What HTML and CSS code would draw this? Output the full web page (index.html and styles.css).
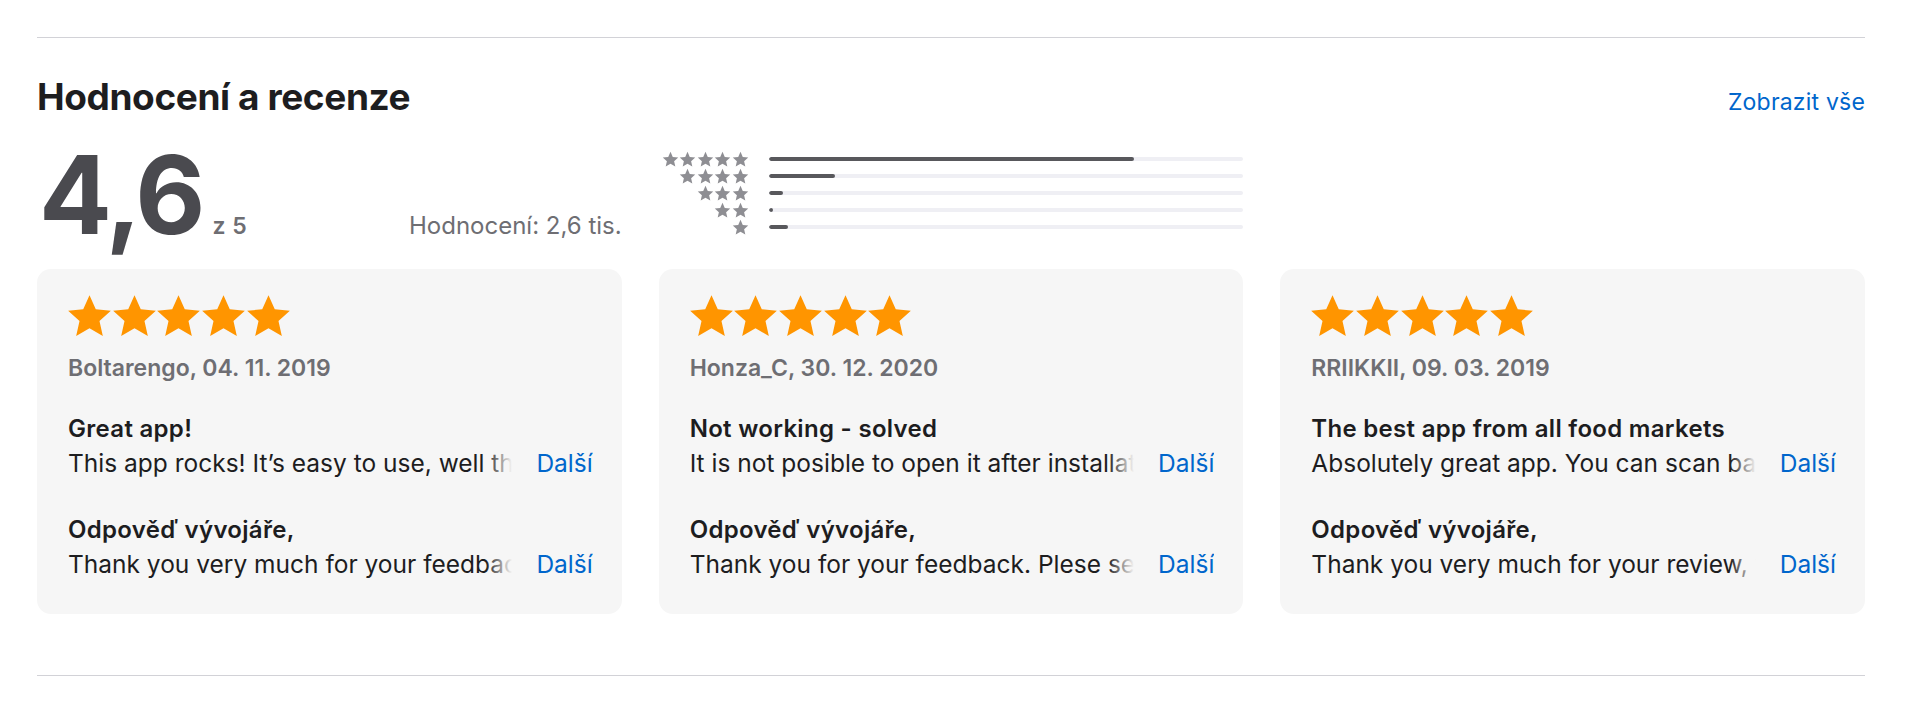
FILE: index.html
```html
<!DOCTYPE html>
<html lang="cs">
<head>
<meta charset="utf-8">
<title>Hodnocení a recenze</title>
<link rel="stylesheet" href="styles.css">
</head>
<body>
<svg width="0" height="0" class="defs" aria-hidden="true">
  <defs>
    <symbol id="star" viewBox="0 0 24 24">
      <polygon points="12,1.2 15.2,8.3 22.9,9.1 17.1,14.3 18.8,21.9 12,18 5.2,21.9 6.9,14.3 1.1,9.1 8.8,8.3"/>
    </symbol>
  </defs>
</svg>
<section class="ratings">
  <header class="head">
    <h2 class="title">Hodnocení a recenze</h2>
    <a class="link" href="#">Zobrazit vše</a>
  </header>

  <div class="summary">
    <div class="score-col">
      <div class="score"><span class="big">4,6</span><span class="outof">z 5</span></div>
      <div class="count">Hodnocení: 2,6 tis.</div>
    </div>
    <div class="hist">
      <div class="hrow">
        <div class="hstars"><svg><use href="#star"/></svg><svg><use href="#star"/></svg><svg><use href="#star"/></svg><svg><use href="#star"/></svg><svg><use href="#star"/></svg></div>
        <div class="track"><div class="fill" style="width:77%"></div></div>
      </div>
      <div class="hrow">
        <div class="hstars"><svg><use href="#star"/></svg><svg><use href="#star"/></svg><svg><use href="#star"/></svg><svg><use href="#star"/></svg></div>
        <div class="track"><div class="fill" style="width:14%"></div></div>
      </div>
      <div class="hrow">
        <div class="hstars"><svg><use href="#star"/></svg><svg><use href="#star"/></svg><svg><use href="#star"/></svg></div>
        <div class="track"><div class="fill" style="width:3%"></div></div>
      </div>
      <div class="hrow">
        <div class="hstars"><svg><use href="#star"/></svg><svg><use href="#star"/></svg></div>
        <div class="track"><div class="fill" style="width:1%"></div></div>
      </div>
      <div class="hrow">
        <div class="hstars"><svg><use href="#star"/></svg></div>
        <div class="track"><div class="fill" style="width:4%"></div></div>
      </div>
    </div>
    <div class="spacer"></div>
  </div>

  <div class="cards">
    <article class="card">
      <div class="stars"><svg><use href="#star"/></svg><svg><use href="#star"/></svg><svg><use href="#star"/></svg><svg><use href="#star"/></svg><svg><use href="#star"/></svg></div>
      <div class="author">Boltarengo, 04. 11. 2019</div>
      <h3 class="rtitle">Great app!</h3>
      <div class="line"><span class="txt">This app rocks! It’s easy to use, well thought out and I really like the scanning feature.</span><a class="more" href="#">Další</a></div>
      <h3 class="rtitle dev">Odpověď vývojáře,</h3>
      <div class="line"><span class="txt">Thank you very much for your feedback, we are glad you like the app.</span><a class="more" href="#">Další</a></div>
    </article>
    <article class="card">
      <div class="stars"><svg><use href="#star"/></svg><svg><use href="#star"/></svg><svg><use href="#star"/></svg><svg><use href="#star"/></svg><svg><use href="#star"/></svg></div>
      <div class="author">Honza_C, 30. 12. 2020</div>
      <h3 class="rtitle">Not working - solved</h3>
      <div class="line"><span class="txt">It is not posible to open it after installation, it crashes immediately.</span><a class="more" href="#">Další</a></div>
      <h3 class="rtitle dev">Odpověď vývojáře,</h3>
      <div class="line"><span class="txt">Thank you for your feedback. Plese send us more details.</span><a class="more" href="#">Další</a></div>
    </article>
    <article class="card">
      <div class="stars"><svg><use href="#star"/></svg><svg><use href="#star"/></svg><svg><use href="#star"/></svg><svg><use href="#star"/></svg><svg><use href="#star"/></svg></div>
      <div class="author">RRIIKKII, 09. 03. 2019</div>
      <h3 class="rtitle">The best app from all food markets</h3>
      <div class="line"><span class="txt">Absolutely great app. You can scan barcodes and pay quickly.</span><a class="more" href="#">Další</a></div>
      <h3 class="rtitle dev">Odpověď vývojáře,</h3>
      <div class="line"><span class="txt">Thank you very much for your review, we appreciate it.</span><a class="more" href="#">Další</a></div>
    </article>
  </div>
</section>
</body>
</html>
```

FILE: styles.css
```css
html, body {
  margin: 0;
  padding: 0;
  background: #ffffff;
}
body {
  font-family: Inter, "Liberation Sans", sans-serif;
  color: #1d1d1f;
}
.defs {
  position: absolute;
}
.ratings {
  margin: 37px 55px 0 37px;
  border-top: 1px solid #d2d2d7;
  border-bottom: 1px solid #d2d2d7;
  padding-bottom: 61px;
}
.head {
  display: flex;
  justify-content: space-between;
  align-items: baseline;
  padding-top: 37px;
}
.title {
  margin: 0;
  font-size: 37px;
  font-weight: 700;
  letter-spacing: -0.4px;
  line-height: 44px;
}
.link {
  color: #0066cc;
  text-decoration: none;
  font-size: 23px;
  letter-spacing: 0.2px;
}
.summary {
  display: grid;
  grid-template-columns: repeat(3, minmax(0, 1fr));
  column-gap: 37px;
  margin-top: 24px;
}
.score-col {
  display: flex;
  justify-content: space-between;
  align-items: baseline;
  min-width: 0;
}
.score {
  display: flex;
  align-items: baseline;
}
.big {
  font-size: 108px;
  font-weight: 700;
  line-height: 104px;
  letter-spacing: -3px;
  color: #4a4a4f;
  margin-left: 2px;
}
.outof {
  font-size: 23px;
  font-weight: 600;
  color: #6e6e73;
  margin-left: 10px;
  letter-spacing: 0.5px;
}
.count {
  font-size: 24px;
  color: #6e6e73;
}
.hist {
  display: flex;
  flex-direction: column;
  gap: 5px;
  padding-top: 10px;
  min-width: 0;
}
.hrow {
  display: flex;
  align-items: center;
  height: 12px;
}
.hstars {
  width: 90px;
  display: flex;
  justify-content: flex-end;
  gap: 0.5px;
  fill: #8e8e93;
}
.hstars svg {
  width: 17px;
  height: 17px;
}
.track {
  flex: 1;
  margin-left: 20px;
  height: 4px;
  border-radius: 2px;
  background: #efeff4;
  overflow: hidden;
}
.fill {
  height: 100%;
  background: #58585c;
  border-radius: 2px;
  min-width: 4px;
}
.cards {
  display: grid;
  grid-template-columns: repeat(3, minmax(0, 1fr));
  column-gap: 37px;
  margin-top: 22px;
}
.card {
  min-width: 0;
  background: #f6f6f6;
  border-radius: 14px;
  padding: 24px 29px 34px 31px;
}
.stars {
  display: flex;
  gap: 0;
  fill: #ff9500;
  margin-left: -2px;
}
.stars svg {
  width: 47px;
  height: 47px;
  margin-right: -2.3px;
}
.author {
  margin-top: 14px;
  font-size: 23px;
  font-weight: 600;
  color: #6e6e73;
  line-height: 28px;
}
.rtitle {
  margin: 32px 0 0;
  font-size: 24px;
  font-weight: 600;
  line-height: 30px;
  letter-spacing: 0.3px;
  color: #1d1d1f;
}
.rtitle.dev {
  margin-top: 36px;
}
.line {
  position: relative;
  overflow: hidden;
  white-space: nowrap;
  font-size: 24.5px;
  line-height: 32px;
  margin-top: 3px;
}
.txt {
  color: #1d1d1f;
}
.more {
  position: absolute;
  right: 0;
  top: 0;
  padding-left: 50px;
  background: linear-gradient(to right, rgba(246, 246, 246, 0) 0, #f6f6f6 26px);
  color: #0066cc;
  text-decoration: none;
}
```
